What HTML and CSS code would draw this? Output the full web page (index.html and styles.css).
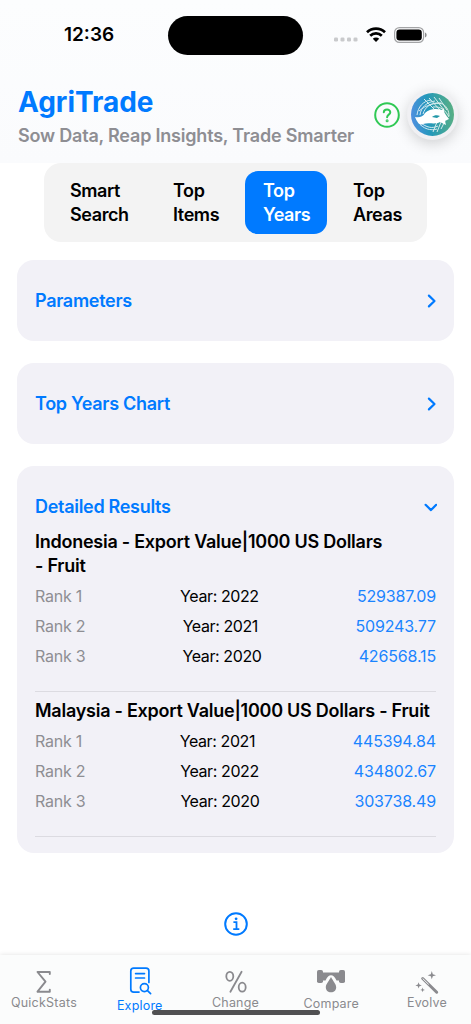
FILE: index.html
```html
<!DOCTYPE html>
<html lang="en">
<head>
    <meta charset="UTF-8">
    <meta name="viewport" content="width=device-width, initial-scale=1.0">
    <title>AgriTrade</title>
    <link rel="stylesheet" href="styles.css">
</head>
<body>
    <header class="top">
        <div class="status-bar">
            <span class="clock">12:36</span>
            <div class="island"></div>
            <div class="status-icons">
                <svg class="dots" width="24" height="5" viewBox="0 0 24 5" fill="#c9cacc">
                    <rect x="0" y="0.5" width="4" height="4" rx="1.3"/>
                    <rect x="6.5" y="0.5" width="4" height="4" rx="1.3"/>
                    <rect x="13" y="0.5" width="4" height="4" rx="1.3"/>
                    <rect x="19.5" y="0.5" width="4" height="4" rx="1.3"/>
                </svg>
                <svg width="20" height="15" viewBox="0 0 20 15" fill="none" stroke="#000" stroke-width="2.7">
                    <path d="M1 5.3 A13 13 0 0 1 19 5.3"/>
                    <path d="M4.2 8.7 A8.3 8.3 0 0 1 15.8 8.7"/>
                    <path d="M10 15 L6.8 11.8 A4.6 4.6 0 0 1 13.2 11.8 Z" fill="#000" stroke="none"/>
                </svg>
                <svg width="33" height="16" viewBox="0 0 33 16">
                    <rect x="0.6" y="0.6" width="29" height="14.8" rx="4.8" fill="none" stroke="#a3a4a6" stroke-width="1.2"/>
                    <rect x="2.4" y="2.5" width="25.4" height="11" rx="3.2" fill="#000"/>
                    <path d="M31 5.5 C33.2 6.2 33.2 9.8 31 10.5 Z" fill="#8c8d8f"/>
                </svg>
            </div>
        </div>
        <div class="brand">
            <div>
                <h1>AgriTrade</h1>
                <p class="tagline">Sow Data, Reap Insights, Trade Smarter</p>
            </div>
            <div class="brand-actions">
                <svg width="26" height="26" viewBox="0 0 26 26" fill="none" stroke="#30c955" stroke-width="2" stroke-linecap="round" stroke-linejoin="round">
                    <circle cx="13" cy="13" r="11.8"/>
                    <path d="M9.8 10.3 C9.9 6.6 16.3 6.7 16.3 10.2 C16.3 12.6 13.1 12.7 13.1 15.2"/>
                    <circle cx="13.1" cy="18.7" r="0.5" fill="#30c955"/>
                </svg>
                <div class="logo">
                    <svg width="43" height="43" viewBox="0 0 43 43">
                        <defs>
                            <linearGradient id="globe" x1="0" y1="0.5" x2="1" y2="0.4">
                                <stop offset="0" stop-color="#4f8fe0"/>
                                <stop offset="0.4" stop-color="#2398bb"/>
                                <stop offset="1" stop-color="#58af83"/>
                            </linearGradient>
                        </defs>
                        <circle cx="21.5" cy="21.5" r="21.5" fill="url(#globe)"/>
                        <g fill="none" stroke="#fff" stroke-width="1" opacity="0.8">
                            <path d="M6 22 C7 14 12 8 20 7 M9 22 C10 14 16 9 24 8 M12 21 C14 14 20 9 30 10"/>
                            <path d="M8 18 C15 12 24 9 32 11 M22 14 C30 13 35 18 38 24 M32 11 C36 14 38 18 38 23"/>
                            <path d="M13 6 L24 17 M18 5 L29 17 M23 4 L33 17 M28 5 L36 17"/>
                            <path d="M7 29 C12 36 20 38 26 36 M10 30 C15 34 21 36 27 33"/>
                            <path d="M26 29 L22 39 M30 29 L26 39 M34 28 L30 36"/>
                        </g>
                        <path d="M4 24 C8 25 12 24 14 20 C18 16 25 15 31 17 L33 15 C32 19 35 22 38 26 L34 28 L35 32 L29 29 C24 32 18 29 12 31 C9 33 6 29 4 24 Z" fill="#fff"/>
                        <path d="M21 24 C23 22.3 26 21.8 29 23 L26 25 Z" fill="#2398a8"/>
                    </svg>
                </div>
            </div>
        </div>
    </header>

    <main>
        <nav class="tabs">
            <button class="tab tab-search">Smart<br>Search</button>
            <button class="tab">Top<br>Items</button>
            <button class="tab active">Top<br>Years</button>
            <button class="tab tab-areas">Top<br>Areas</button>
        </nav>

        <section class="card">
            <div class="card-title">
                <h2>Parameters</h2>
                <svg width="10" height="16" viewBox="0 0 10 16"><path d="M1.9 2.6 L7.5 8 L1.9 13.4"/></svg>
            </div>
        </section>

        <section class="card">
            <div class="card-title">
                <h2>Top Years Chart</h2>
                <svg width="10" height="16" viewBox="0 0 10 16"><path d="M1.9 2.6 L7.5 8 L1.9 13.4"/></svg>
            </div>
        </section>

        <section class="card results">
            <div class="card-title">
                <h2>Detailed Results</h2>
                <svg width="14" height="10" viewBox="0 0 14 10"><path d="M2.6 2.8 L8 8.1 L13.2 2.8"/></svg>
            </div>
            <div class="group">
                <h3>Indonesia - Export Value|1000 US Dollars<br>- Fruit</h3>
                <div class="row"><span class="rank">Rank 1</span><span class="year">Year: 2022</span><span class="value">529387.09</span></div>
                <div class="row"><span class="rank">Rank 2</span><span class="year">Year: 2021</span><span class="value">509243.77</span></div>
                <div class="row"><span class="rank">Rank 3</span><span class="year">Year: 2020</span><span class="value">426568.15</span></div>
            </div>
            <div class="group">
                <h3>Malaysia - Export Value|1000 US Dollars - Fruit</h3>
                <div class="row"><span class="rank">Rank 1</span><span class="year">Year: 2021</span><span class="value">445394.84</span></div>
                <div class="row"><span class="rank">Rank 2</span><span class="year">Year: 2022</span><span class="value">434802.67</span></div>
                <div class="row"><span class="rank">Rank 3</span><span class="year">Year: 2020</span><span class="value">303738.49</span></div>
            </div>
        </section>

        <div class="info">
            <svg width="24" height="24" viewBox="0 0 24 24" fill="none" stroke="#007aff" stroke-width="2">
                <circle cx="12" cy="12" r="10.8"/>
                <path d="M9.4 10.2 H12.5 V17 M9.2 17.2 H15.3" stroke-width="1.8"/>
                <circle cx="12.1" cy="6.8" r="1.4" fill="#007aff" stroke="none"/>
            </svg>
        </div>
    </main>

    <footer class="bottom-nav">
        <div class="nav-item stats">
            <svg width="30" height="30" viewBox="0 0 30 30" fill="none" stroke="#8a8a8e" stroke-width="1.9" stroke-linecap="round" stroke-linejoin="round">
                <path d="M20.8 8.1 V6 H8.5 L16.5 15.7 L8.5 25.7 H20.8 V23.6"/>
            </svg>
            <span>QuickStats</span>
        </div>
        <div class="nav-item selected">
            <svg width="30" height="30" viewBox="0 0 30 30" fill="none" stroke="#007aff" stroke-width="1.7" stroke-linecap="round" stroke-linejoin="round">
                <path d="M14 26.1 H8.7 Q5.8 26.1 5.8 23.2 V5 Q5.8 2.1 8.7 2.1 H21 Q23.9 2.1 23.9 5 V16.5"/>
                <path d="M10.6 7.6 H19.5 M10.6 12 H19.5"/>
                <circle cx="19.4" cy="21.6" r="4"/>
                <path d="M22.5 24.7 L25.6 27.7"/>
            </svg>
            <span>Explore</span>
        </div>
        <div class="nav-item">
            <svg width="30" height="30" viewBox="0 0 30 30" fill="none" stroke="#8a8a8e" stroke-width="1.8" stroke-linecap="round">
                <ellipse cx="8.8" cy="10.3" rx="3.5" ry="4.5"/>
                <ellipse cx="21.2" cy="21.2" rx="3.5" ry="4.5"/>
                <path d="M20.6 5.7 L9.4 25.8"/>
            </svg>
            <span>Change</span>
        </div>
        <div class="nav-item compare">
            <svg width="30" height="30" viewBox="0 0 30 30" fill="#8a8a8e">
                <rect x="1" y="4" width="6" height="13" rx="1.8"/>
                <rect x="23" y="4" width="6" height="13" rx="1.8"/>
                <path d="M6 6.5 H24 V14.5 H20.5 C19 11 17 9.3 15 9.3 C13 9.3 11 11 9.5 14.5 H6 Z"/>
                <path d="M15 11 C17 15 20.2 18 20.2 21.3 C20.2 24.4 18 26.3 15 26.3 C12 26.3 9.8 24.4 9.8 21.3 C9.8 18 13 15 15 11 Z" stroke="#fbfcfc" stroke-width="1.4" paint-order="stroke"/>
            </svg>
            <span>Compare</span>
        </div>
        <div class="nav-item">
            <svg width="30" height="30" viewBox="0 0 30 30" fill="#8a8a8e">
                <path d="M10.7 12.5 L24.7 26.2" stroke="#8a8a8e" stroke-width="3" stroke-linecap="round"/>
                <path d="M10.9 12.7 L16.4 18.1" stroke="#fbfcfc" stroke-width="1" stroke-linecap="round"/>
                <path d="M19.8 5.1 L20.8 8.2 L24 9.2 L20.8 10.2 L19.8 13.3 L18.8 10.2 L15.6 9.2 L18.8 8.2 Z"/>
                <path d="M6.6 16.3 L7.4 18.6 L9.8 19.4 L7.4 20.2 L6.6 22.5 L5.8 20.2 L3.4 19.4 L5.8 18.6 Z"/>
                <path d="M10.6 21.5 L11.2 23.3 L12.9 23.9 L11.2 24.5 L10.6 26.3 L10 24.5 L8.3 23.9 L10 23.3 Z"/>
            </svg>
            <span>Evolve</span>
        </div>
        <div class="home-indicator"></div>
    </footer>
</body>
</html>
```

FILE: styles.css
```css
* {
    box-sizing: border-box;
}

body {
    font-family: Inter, "Liberation Sans", sans-serif;
    background-color: #fff;
    color: #000;
    margin: 0;
    height: 1024px;
    display: flex;
    flex-direction: column;
    overflow: hidden;
}

h1, h2, h3, p {
    margin: 0;
}

svg {
    display: block;
    flex-shrink: 0;
}

.top {
    height: 163px;
    background: linear-gradient(#fcfdfe, #fafbfd);
}

.status-bar {
    height: 70px;
    display: flex;
    align-items: center;
    padding-left: 64px;
}

.clock {
    width: 104px;
    font-size: 19px;
    line-height: 22px;
    font-weight: 600;
}

.island {
    width: 135px;
    height: 39px;
    border-radius: 20px;
    background: #000;
}

.status-icons {
    display: flex;
    align-items: center;
    gap: 8px;
    margin-left: 31px;
    padding-bottom: 1px;
}

.dots {
    margin-top: 10px;
}

.brand {
    display: flex;
    justify-content: space-between;
    padding: 15px 13px 0 18px;
}

h1 {
    font-size: 28px;
    line-height: 35px;
    font-weight: 700;
    color: #007aff;
    letter-spacing: -0.05px;
}

.tagline {
    font-size: 18px;
    line-height: 24px;
    margin-top: 4px;
    font-weight: 600;
    color: #8e8e93;
    white-space: nowrap;
    letter-spacing: -0.2px;
}

.brand-actions {
    display: flex;
    align-items: center;
    gap: 7px;
    height: 60px;
}

.logo {
    width: 51px;
    height: 51px;
    margin-bottom: 1px;
    padding: 4px;
    border-radius: 50%;
    background: #f0f0f3;
    box-shadow: 0 4px 14px rgba(0, 0, 0, 0.17);
}

main {
    flex: 1;
    padding: 0 17px;
}

.tabs {
    display: flex;
    gap: 8px;
    width: 383px;
    height: 79px;
    margin: 0 0 18px 27px;
    padding: 8px 7px;
    border-radius: 17px;
    background: #f3f3f3;
}

.tab {
    width: 82px;
    height: 63px;
    padding: 1px 0 0 18px;
    border: none;
    border-radius: 13px;
    background: none;
    color: #000;
    font-family: inherit;
    font-size: 18px;
    line-height: 24px;
    font-weight: 600;
    letter-spacing: -0.4px;
    text-align: left;
}

.tab-search {
    width: 96px;
    padding-left: 19px;
}

.tab-areas {
    width: 85px;
}

.tab.active {
    background: #007aff;
    color: #fff;
}

.card {
    height: 81px;
    margin: 0 0 22px;
    padding: 29px 17px 0 18px;
    border-radius: 17px;
    background: #f2f1f7;
}

.card-title {
    display: flex;
    justify-content: space-between;
    align-items: center;
    height: 24px;
}

.card-title svg {
    fill: none;
    stroke: #007aff;
    stroke-width: 2.2;
    stroke-linecap: round;
    stroke-linejoin: round;
}

h2 {
    font-size: 18px;
    line-height: 24px;
    font-weight: 600;
    color: #007aff;
    letter-spacing: -0.3px;
}

.results {
    height: 387px;
}

.group {
    height: 145px;
    margin-right: 1px;
    border-bottom: 1px solid #dcdbe1;
    padding-top: 7px;
}

.results .card-title + .group {
    height: 173px;
    padding-top: 11px;
}

h3 {
    font-size: 18px;
    line-height: 23.5px;
    font-weight: 600;
    letter-spacing: -0.25px;
    white-space: nowrap;
    margin-bottom: 4px;
}

.group + .group h3 {
    margin-bottom: 3px;
}

.row {
    display: flex;
    justify-content: space-between;
    font-size: 16px;
    line-height: 30px;
    letter-spacing: -0.25px;
}

.rank {
    color: #8e8e93;
}

.year {
    letter-spacing: -0.4px;
}

.value {
    color: #1a84ff;
    letter-spacing: -0.15px;
}

.info {
    display: flex;
    justify-content: center;
    margin-top: 59px;
}

.bottom-nav {
    position: relative;
    display: flex;
    justify-content: center;
    height: 69px;
    padding-top: 11px;
    background: #fbfcfc;
    box-shadow: 0 0 5px rgba(0, 0, 0, 0.12);
}

.nav-item {
    flex: 0 0 95.75px;
    display: flex;
    flex-direction: column;
    align-items: center;
    font-size: 12.5px;
    line-height: 14px;
    letter-spacing: 0.2px;
    color: #8a8a8e;
}

.stats {
    letter-spacing: 0.25px;
}

.nav-item.selected {
    color: #007aff;
}

.selected span {
    margin-top: 3px;
}

.compare span {
    margin-top: 1px;
}

/* sits over the labels */
.home-indicator {
    position: absolute;
    left: 152px;
    bottom: 9px;
    width: 168px;
    height: 5px;
    border-radius: 3px;
    background: #505052;
}
```
